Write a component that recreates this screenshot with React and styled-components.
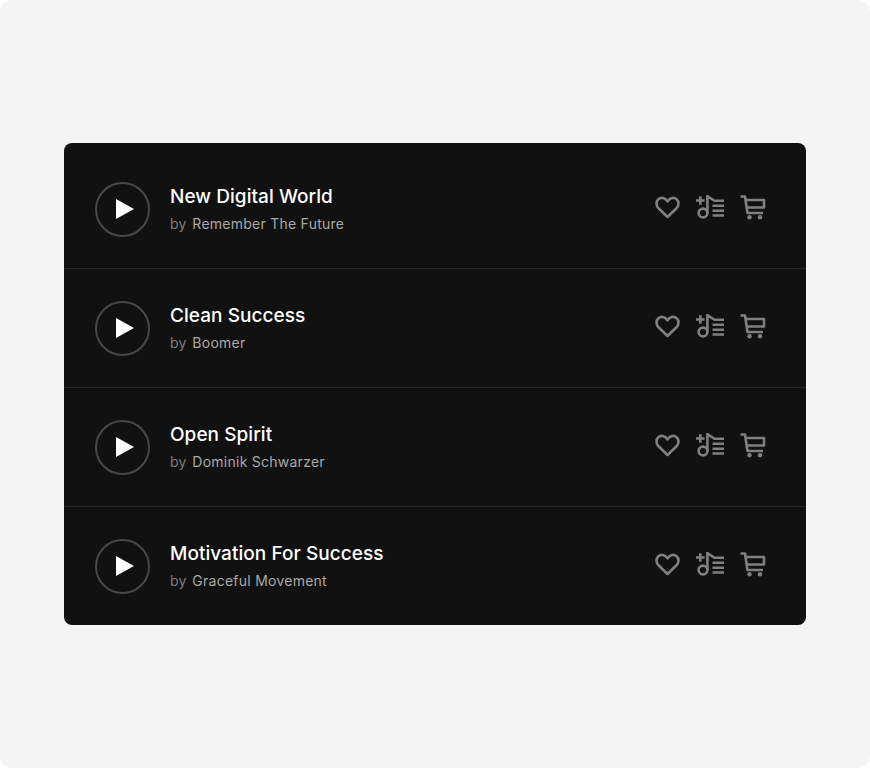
import styled, { createGlobalStyle } from 'styled-components';

const tracks = [
    { title: 'New Digital World', artist: 'Remember The Future' },
    { title: 'Clean Success', artist: 'Boomer' },
    { title: 'Open Spirit', artist: 'Dominik Schwarzer' },
    { title: 'Motivation For Success', artist: 'Graceful Movement' },
];

function HeartIcon() {
    return (
        <svg width="28" height="26" viewBox="0 0 28 26" fill="none" stroke="currentColor" strokeWidth="2.6" strokeLinejoin="round">
            <path d="M13.5 22 L4.5 13.2 C1.8 10.4 2 6.2 4.4 4.2 C7 2 11 2.6 13.5 6.4 C16 2.6 20 2 22.6 4.2 C25 6.2 25.2 10.4 22.5 13.2 Z" />
        </svg>
    );
}

function QueueIcon() {
    return (
        <svg width="30" height="26" viewBox="0 0 30 26" fill="none" stroke="currentColor" strokeWidth="2.6">
            <path d="M0 5.5 H8.6 M4.3 1.2 V9.8" />
            <circle cx="7" cy="18" r="4.4" />
            <path d="M11.4 18 V1.2 L18.5 5.8 H28" />
            <path d="M16.5 10.8 H28 M16.5 15.8 H28 M16.5 20.5 H28" />
        </svg>
    );
}

function CartIcon() {
    return (
        <svg width="26" height="26" viewBox="0 0 26 26" fill="none" stroke="currentColor" strokeWidth="2.6" strokeLinejoin="round">
            <path d="M0.5 1.5 H5 L7.5 18 H23" />
            <path d="M5.5 5 H24 V12.5 H6.5" />
            <circle cx="9.5" cy="22.3" r="2.2" fill="currentColor" stroke="none" />
            <circle cx="20" cy="22.3" r="2.2" fill="currentColor" stroke="none" />
        </svg>
    );
}

export default function App() {
    return (
        <>
            <GlobalStyle />
            <Frame>
                <Card>
                    {tracks.map((track) => (
                        <Row key={track.title}>
                            <PlayButton aria-label={`Play ${track.title}`}>
                                <svg width="18" height="20" viewBox="0 0 18 20">
                                    <path d="M0 0 L18 10 L0 20 Z" fill="#fff" />
                                </svg>
                            </PlayButton>
                            <Info>
                                <Title>{track.title}</Title>
                                <Artist>by <span>{track.artist}</span></Artist>
                            </Info>
                            <Actions>
                                <HeartIcon />
                                <QueueIcon />
                                <CartIcon />
                            </Actions>
                        </Row>
                    ))}
                </Card>
            </Frame>
        </>
    );
}

const GlobalStyle = createGlobalStyle`
    html, body {
        margin: 0;
        background: #fff;
    }
`;

const Frame = styled.main`
    box-sizing: border-box;
    width: 870px;
    height: 768px;
    padding: 143px 64px 0;
    background: #f4f4f4;
    border-radius: 12px;
    font-family: "Inter", "Liberation Sans", sans-serif;
`;

const Card = styled.section`
    height: 482px;
    box-sizing: border-box;
    padding-top: 7px;
    background: #111;
    border-radius: 8px;
    overflow: hidden;
`;

const Row = styled.div`
    box-sizing: border-box;
    height: 119px;
    display: flex;
    align-items: center;
    padding: 0 40px 0 31px;
    border-bottom: 1px solid #262626;

    &:last-child {
        height: 118px;
        border-bottom: 0;
    }
`;

const PlayButton = styled.button`
    flex: none;
    width: 55px;
    height: 55px;
    padding: 0 0 0 4px;
    display: flex;
    align-items: center;
    justify-content: center;
    background: none;
    border: 2px solid #484848;
    border-radius: 50%;
`;

const Info = styled.div`
    flex: 1;
    margin-left: 20px;
`;

const Title = styled.h3`
    margin: 0;
    font-size: 19px;
    line-height: 26px;
    font-weight: 500;
    letter-spacing: 0.05px;
    color: #fff;
`;

const Artist = styled.p`
    margin: 4px 0 0;
    font-size: 14px;
    line-height: 20px;
    letter-spacing: 0.25px;
    color: #7d7d7d;

    span {
        margin-left: 1.5px;
        color: #a8a8a8;
    }
`;

const Actions = styled.div`
    display: flex;
    align-items: center;
    gap: 14px;
    margin-top: -2px;
    color: #808080;
`;
